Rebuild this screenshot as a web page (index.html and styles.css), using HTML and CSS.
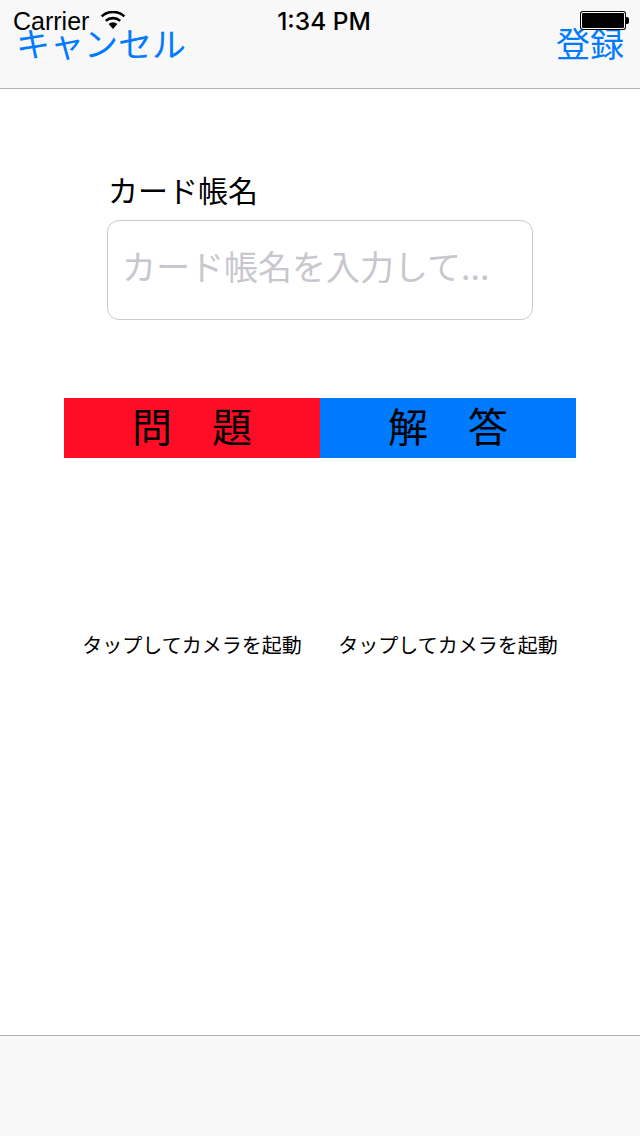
FILE: index.html
```html
<!DOCTYPE html>
<html lang="ja">

<head>
  <meta charset="UTF-8">
  <meta name="viewport" content="width=device-width, initial-scale=1.0">
  <title>カード帳登録</title>
  <link rel="stylesheet" href="styles.css">
</head>

<body>
  <div class="screen">
    <!-- Status bar lies over the nav bar -->
    <div class="status-bar">
      <div class="status-left">
        <span class="carrier">Carrier</span>
        <svg class="wifi" width="26" height="18" viewBox="0 0 26 18">
          <path d="M13 18 L8.6 13 A6.6 6.6 0 0 1 17.4 13 Z" fill="#000" />
          <path d="M5.8 9.9 A10.8 10.8 0 0 1 20.2 9.9" fill="none" stroke="#000" stroke-width="2.6" />
          <path d="M1.6 5.4 A16.8 16.8 0 0 1 24.4 5.4" fill="none" stroke="#000" stroke-width="2.6" />
        </svg>
      </div>
      <span class="time">1:34 PM</span>
      <div class="battery">
        <div class="battery-body"></div>
        <div class="battery-cap"></div>
      </div>
    </div>

    <header class="nav-bar">
      <span class="nav-button">キャンセル</span>
      <span class="nav-button">登録</span>
    </header>

    <main class="content">
      <div class="name-section">
        <label class="name-label">カード帳名</label>
        <div class="name-input">カード帳名を入力して...</div>
      </div>

      <div class="tabs">
        <div class="tab tab-question">問　題</div>
        <div class="tab tab-answer">解　答</div>
      </div>

      <div class="camera-row">
        <div class="camera-hint">タップしてカメラを起動</div>
        <div class="camera-hint">タップしてカメラを起動</div>
      </div>
    </main>

    <footer class="toolbar"></footer>
  </div>
</body>

</html>
```

FILE: styles.css
```css
* {
  margin: 0;
  padding: 0;
  box-sizing: border-box;
}

body {
  font-family: 'Liberation Sans', 'Noto Sans CJK JP', sans-serif;
  background: #fff;
  color: #000;
}

.screen {
  position: relative;
  width: 640px;
  height: 1136px;
  display: flex;
  flex-direction: column;
  overflow: hidden;
}

/* Status bar */
.status-bar {
  position: absolute;
  top: 0;
  left: 0;
  width: 640px;
  height: 40px;
  padding: 8px 11px 0 13px;
  display: flex;
  justify-content: space-between;
  align-items: flex-start;
}

.status-left {
  display: flex;
  align-items: flex-start;
  gap: 11px;
}

.carrier {
  font-size: 25px;
  line-height: 27px;
}

.wifi {
  margin-top: 3px;
}

.time {
  position: absolute;
  left: 4px;
  width: 100%;
  text-align: center;
  font-family: 'Inter', sans-serif;
  font-size: 24.5px;
  font-weight: 500;
  line-height: 27px;
}

.battery {
  display: flex;
  align-items: center;
  margin-top: 3px;
}

.battery-body {
  width: 46px;
  height: 19px;
  background: #000;
  border-radius: 3px;
  box-shadow: inset 0 0 0 1px #000, inset 0 0 0 2px #fff;
}

.battery-cap {
  width: 3px;
  height: 7px;
  background: #000;
  border-radius: 0 2px 2px 0;
}

/* Nav bar */
.nav-bar {
  height: 89px;
  flex-shrink: 0;
  background: #f8f8f8;
  border-bottom: 1px solid #b2b2b2;
  padding: 21px 16px 0 16px;
  display: flex;
  justify-content: space-between;
  align-items: flex-start;
}

.nav-button {
  font-family: 'Noto Sans CJK JP', sans-serif;
  font-size: 34px;
  line-height: 44px;
  color: #007aff;
}

/* Main content */
.content {
  flex: 1;
  padding: 0 64px;
  font-family: 'Noto Sans CJK JP', sans-serif;
}

.name-section {
  margin: 80px 43px 0;
}

.name-label {
  display: block;
  height: 51px;
  padding-left: 1px;
  font-size: 30px;
  line-height: 40px;
}

.name-input {
  height: 100px;
  padding: 0 14px;
  border: 1px solid #ccccd0;
  border-radius: 12px;
  font-size: 34px;
  line-height: 90px;
  color: #c7c7cd;
}

.tabs {
  display: flex;
  margin-top: 78px;
}

.tab {
  flex: 1;
  height: 60px;
  text-align: center;
  font-size: 40px;
  line-height: 55px;
}

.tab-question {
  background: #ff0d26;
}

.tab-answer {
  background: #007aff;
}

.camera-row {
  display: flex;
  margin-top: 172px;
}

.camera-hint {
  flex: 1;
  text-align: center;
  font-size: 20px;
  line-height: 30px;
}

/* Bottom toolbar */
.toolbar {
  height: 101px;
  flex-shrink: 0;
  background: #f8f8f8;
  border-top: 1px solid #b2b2b2;
}
```
